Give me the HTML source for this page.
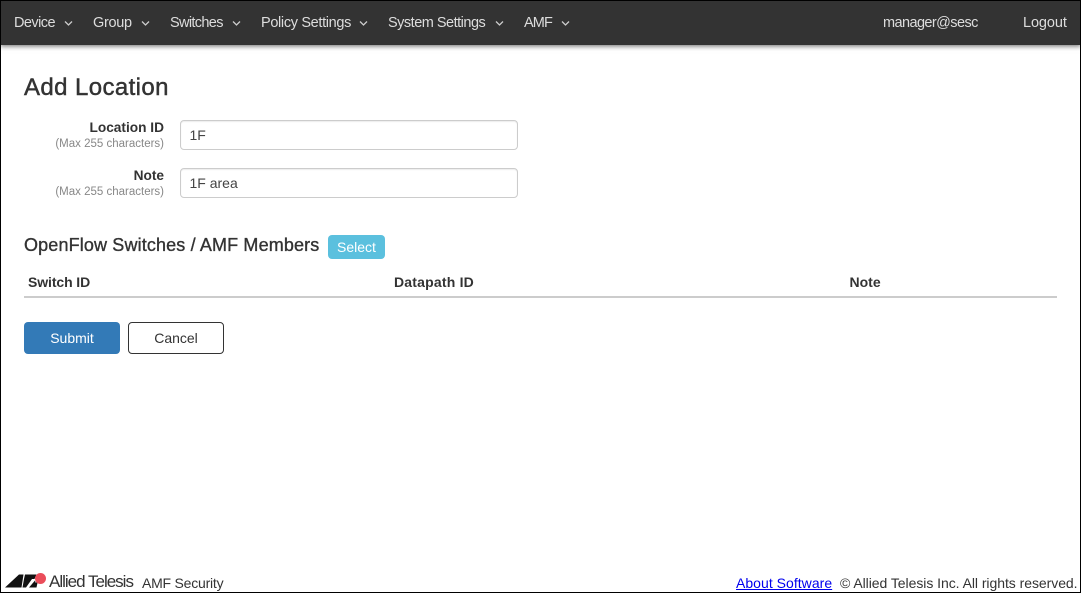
<!DOCTYPE html>
<html><head><meta charset="utf-8"><style>
html,body{margin:0;padding:0}
body{width:1081px;height:593px;position:relative;overflow:hidden;background:#fff;font-family:"Liberation Sans",sans-serif;color:#333}
#frame{position:absolute;inset:0;border:1px solid #000;z-index:9;pointer-events:none}
#nav{position:absolute;left:0;top:0;width:1081px;height:45px;background:#333;box-shadow:0 1px 5px rgba(0,0,0,.6)}
.t{position:absolute;white-space:nowrap}
.n{color:#ddd;font-size:14.5px;top:15px;line-height:17px}
.c{position:absolute;top:20px}
.inp{position:absolute;left:180px;width:336px;height:28px;border:1px solid #ccc;border-radius:4px;font-size:14px;line-height:28px;color:#444;text-indent:8.500px;box-shadow:inset 0 1px 1px rgba(0,0,0,.075)}
.lb{font-weight:bold;font-size:13.700px;line-height:16px;text-align:right;right:917px}
.sm{font-size:11.500px;line-height:14px;color:#888;text-align:right;right:917px}
.th{font-weight:bold;font-size:14px;line-height:17px;top:274px}
.btn{position:absolute;box-sizing:border-box;border-radius:4px;text-align:center;font-size:14px}
</style></head><body>
<div id="nav">
<span class="t n" style="left:14px;letter-spacing:-.55px">Device</span>
<span class="t n" style="left:93px;letter-spacing:-.3px">Group</span>
<span class="t n" style="left:170px;letter-spacing:-.65px">Switches</span>
<span class="t n" style="left:261px;letter-spacing:-.34px">Policy Settings</span>
<span class="t n" style="left:388px;letter-spacing:-.5px">System Settings</span>
<span class="t n" style="left:524px;letter-spacing:-.9px">AMF</span>
<span class="t n" style="left:883px;letter-spacing:-.58px">manager@sesc</span>
<span class="t n" style="left:1023px;letter-spacing:-.1px">Logout</span>
<svg class="c" style="left:64px" width="9" height="7"><path d="M1 1.500L4.500 5L8 1.500" fill="none" stroke="#ccc" stroke-width="1.300"/></svg>
<svg class="c" style="left:141px" width="9" height="7"><path d="M1 1.500L4.500 5L8 1.500" fill="none" stroke="#ccc" stroke-width="1.300"/></svg>
<svg class="c" style="left:232px" width="9" height="7"><path d="M1 1.500L4.500 5L8 1.500" fill="none" stroke="#ccc" stroke-width="1.300"/></svg>
<svg class="c" style="left:359px" width="9" height="7"><path d="M1 1.500L4.500 5L8 1.500" fill="none" stroke="#ccc" stroke-width="1.300"/></svg>
<svg class="c" style="left:495px" width="9" height="7"><path d="M1 1.500L4.500 5L8 1.500" fill="none" stroke="#ccc" stroke-width="1.300"/></svg>
<svg class="c" style="left:561px" width="9" height="7"><path d="M1 1.500L4.500 5L8 1.500" fill="none" stroke="#ccc" stroke-width="1.300"/></svg>
</div>
<span class="t" style="left:24px;top:73px;font-size:24px;line-height:29px;letter-spacing:.4px;-webkit-text-stroke:.45px #333">Add Location</span>
<span class="t lb" style="top:120px">Location ID</span>
<span class="t sm" style="top:137px">(Max 255 characters)</span>
<div class="inp" style="top:120px">1F</div>
<span class="t lb" style="top:168px">Note</span>
<span class="t sm" style="top:185px">(Max 255 characters)</span>
<div class="inp" style="top:168px">1F area</div>
<span class="t" style="left:24px;top:234px;font-size:18px;line-height:22px;letter-spacing:.14px;-webkit-text-stroke:.35px #333">OpenFlow Switches / AMF Members</span>
<div class="btn" style="left:328px;top:235px;width:57px;height:24px;background:#5bc0de;color:#fff;line-height:24px;border:0">Select</div>
<span class="t th" style="left:28px;letter-spacing:-.1px">Switch ID</span>
<span class="t th" style="left:394px;letter-spacing:.2px">Datapath ID</span>
<span class="t th" style="left:849.500px">Note</span>
<div style="position:absolute;left:24px;top:296px;width:1033px;height:2px;background:#ccc"></div>
<div class="btn" style="left:24px;top:322px;width:96px;height:32px;background:#337ab7;color:#fff;line-height:32px;border:0">Submit</div>
<div class="btn" style="left:128px;top:322px;width:96px;height:32px;background:#fff;color:#333;line-height:30px;border:1px solid #333">Cancel</div>
<svg style="position:absolute;left:0;top:570px" width="50" height="23" viewBox="0 0 50 23"><path d="M5 17.500L19 4.500H23.500L21.500 17.500ZM25 4.500H36.500L34.500 9H32L26 17.500H22.500L24 9ZM29 17.500L35 10.500L35.800 13L38 10.500L36.500 17.500Z" fill="#111"/><circle cx="40.500" cy="8.500" r="5.500" fill="#ea4d5a"/></svg>
<span class="t" style="left:49px;top:572px;font-size:17px;line-height:19px;letter-spacing:-1px;color:#333">Allied Telesis</span>
<span class="t" style="left:142px;top:575px;font-size:14px;line-height:17px;letter-spacing:-.22px;color:#333">AMF Security</span>
<a class="t" style="left:736px;top:575px;font-size:14px;line-height:17px;color:#00e;text-decoration:underline;letter-spacing:.03px">About Software</a>
<span class="t" style="left:840px;top:575px;font-size:14px;line-height:17px;color:#333;letter-spacing:-.05px">© Allied Telesis Inc. All rights reserved.</span>
<div id="frame"></div>
</body></html>
